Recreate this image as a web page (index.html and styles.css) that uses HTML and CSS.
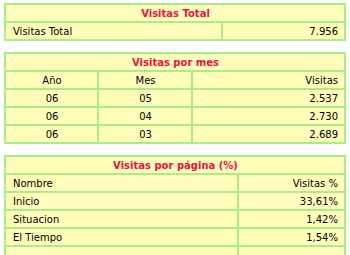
FILE: index.html
```html
<!DOCTYPE html>
<html lang="es">
<head>
<meta charset="utf-8">
<title>Estadísticas</title>
<link rel="stylesheet" href="styles.css">
</head>
<body>
<table class="stats">
  <tr><th class="title" colspan="2">Visitas Total</th></tr>
  <tr><td class="left">Visitas Total</td><td class="right w-total">7.956</td></tr>
</table>

<table class="stats">
  <tr><th class="title" colspan="3">Visitas por mes</th></tr>
  <tr><td class="center c-year">Año</td><td class="center c-month">Mes</td><td class="right">Visitas</td></tr>
  <tr><td class="center">06</td><td class="center">05</td><td class="right">2.537</td></tr>
  <tr><td class="center">06</td><td class="center">04</td><td class="right">2.730</td></tr>
  <tr><td class="center">06</td><td class="center">03</td><td class="right">2.689</td></tr>
</table>

<table class="stats">
  <tr><th class="title" colspan="2">Visitas por página (%)</th></tr>
  <tr><td class="left">Nombre</td><td class="right w-pct">Visitas %</td></tr>
  <tr><td class="left">Inicio</td><td class="right">33,61%</td></tr>
  <tr><td class="left">Situacion</td><td class="right">1,42%</td></tr>
  <tr><td class="left">El Tiempo</td><td class="right">1,54%</td></tr>
  <tr><td class="left">&nbsp;</td><td class="right">&nbsp;</td></tr>
</table>
</body>
</html>
```
FILE: styles.css
```css
html, body {
  margin: 0;
  padding: 0;
  background: #ffffff;
}
body {
  padding: 3px 5px 0 4px;
  font-family: "DejaVu Sans", Verdana, sans-serif;
  font-size: 10px;
  color: #000000;
}
.stats {
  width: 342px;
  border-collapse: collapse;
  border: 2px solid #6ee855;
  background: #ffffbb;
  margin-bottom: 11px;
}
.stats th, .stats td {
  border: 2px solid #a8ee88;
  height: 16px;
  padding: 0 6px 0 7px;
  white-space: nowrap;
}
.stats .title {
  color: #ee1144;
  font-weight: bold;
  text-align: center;
}
.left { text-align: left; }
.right { text-align: right; }
.center { text-align: center; }
.w-total { width: 108px; }
.w-pct { width: 92px; }
.c-year { width: 78px; }
.c-month { width: 79px; }
```
